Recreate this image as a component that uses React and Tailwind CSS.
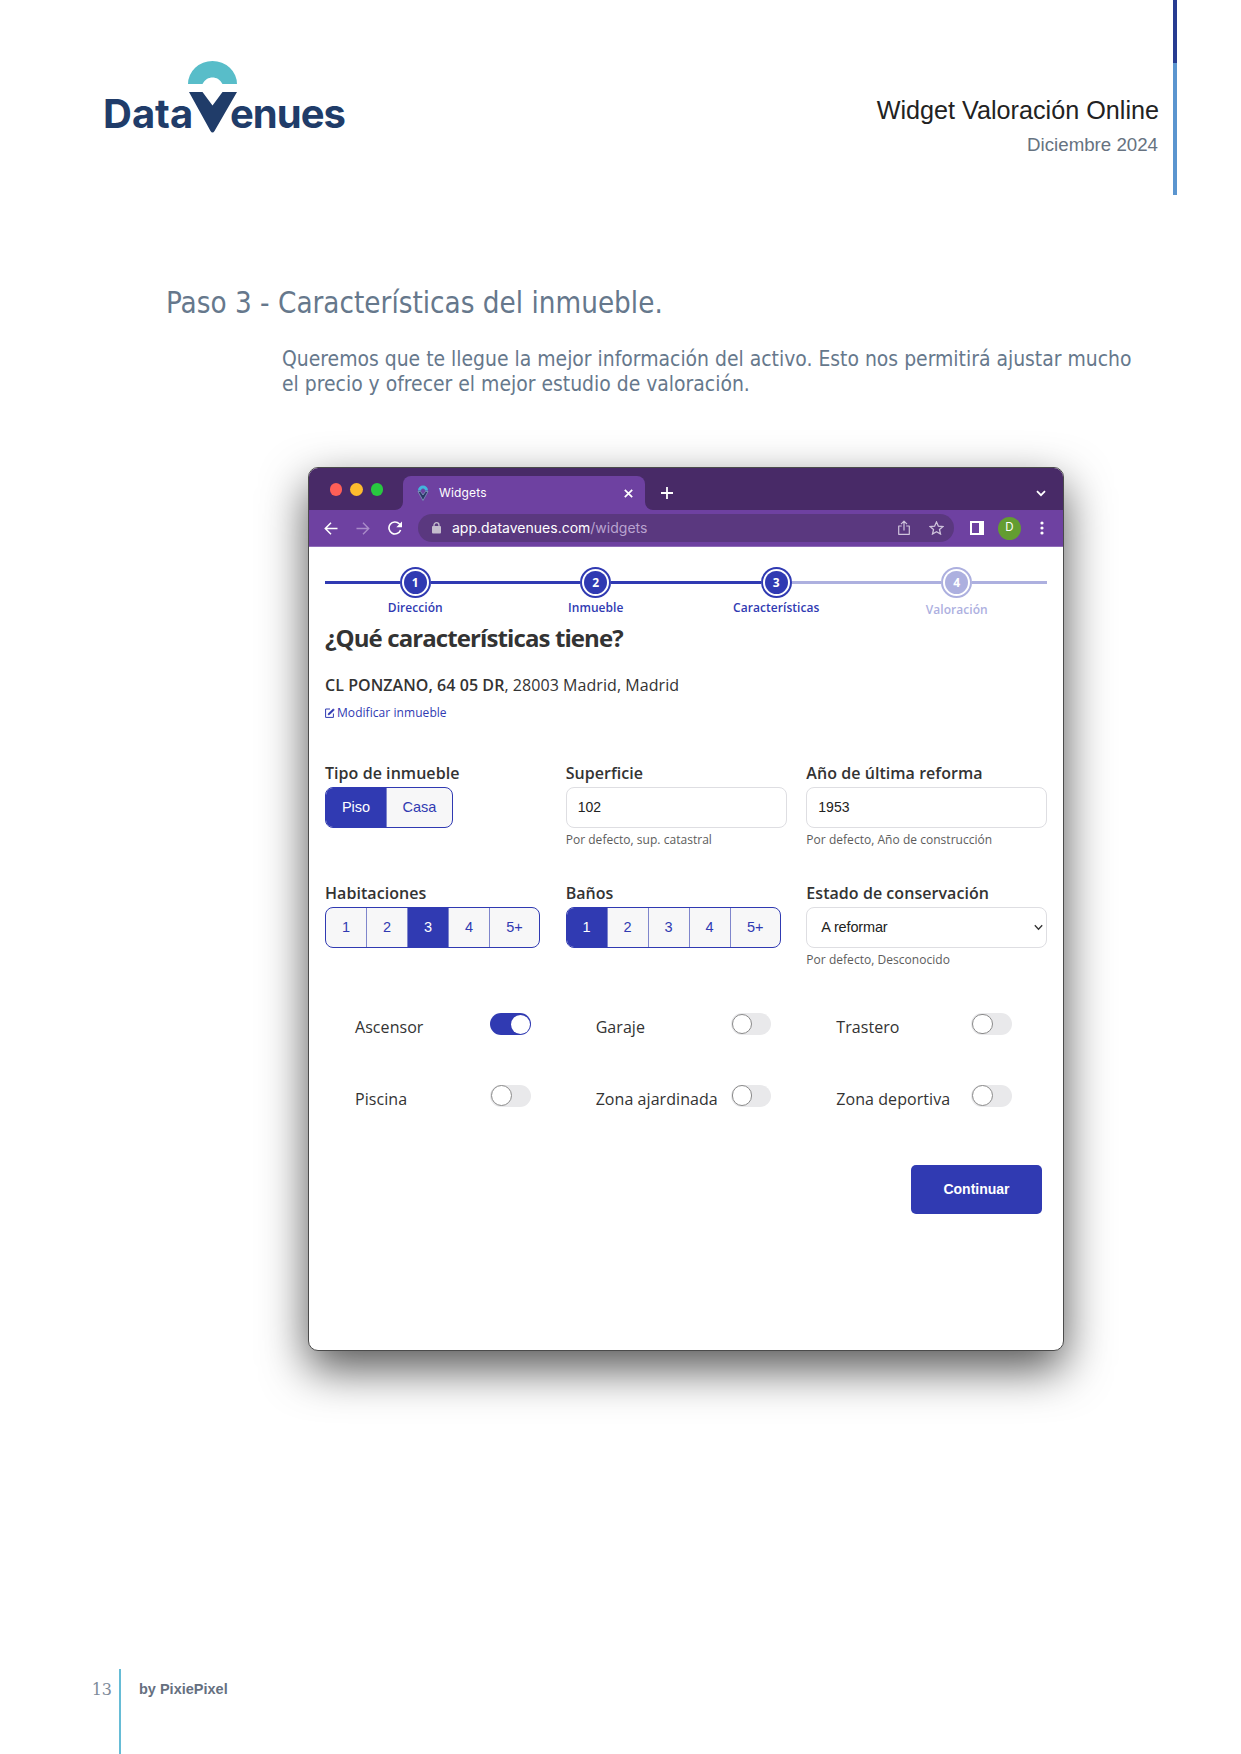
const OPEN = "font-['Open_Sans','Noto_Sans',sans-serif]";
const ARIAL = "font-['Liberation_Sans',Arial,sans-serif]";
const INTER = "font-['Inter',sans-serif]";
const DEJA = "font-['DejaVu_Sans_Condensed','DejaVu_Sans',sans-serif] [font-stretch:condensed]";

function Logo() {
  return (
    <div className={`relative mt-[60px] ml-[106px] h-[74px] w-[242px] text-[40px] leading-[50px] font-bold text-[#203c69] ${INTER}`}>
      <span className="absolute top-[29px] left-[-3px] tracking-[0px]">Data</span>
      <svg className="absolute top-0 left-[81px]" width="52" height="74" viewBox="0 0 52 74">
        <path d="M1 24A24.5 23 0 0 1 50 24H35.5C33 19.5 29.500 17.500 25.500 17.500S18 19.500 15.500 24Z" fill="#58bdc9" />
        <path d="M2 32H15.500L25.500 45.500L35.500 32H50L27.500 71Q25.500 74 23.500 71Z" fill="#203c69" />
      </svg>
      <span className="absolute top-[29px] left-[124px] tracking-[-1px]">enues</span>
    </div>
  );
}

function Favicon() {
  return (
    <svg width="12" height="16" viewBox="0 0 12 16">
      <path d="M1 5.500A5 5 0 0 1 11 5.500H8A2 2 0 0 0 4 5.500Z" fill="#43b4dc" />
      <path d="M1 6.500L6 15.500L11 6.500H8.500L6 10L3.500 6.500Z" fill="#2b3767" stroke="#7d9dbd" strokeWidth="0.8" />
    </svg>
  );
}

function TitleBar() {
  return (
    <div className="flex h-[42px] items-end bg-[#482a67]">
      <div className="ml-[20.500px] flex gap-[8px] self-start pt-[15px]">
        <div className="size-[12.500px] rounded-full bg-[#fe5f57]" />
        <div className="size-[12.500px] rounded-full bg-[#febc2e]" />
        <div className="size-[12.500px] rounded-full bg-[#28c840]" />
      </div>
      <svg className="ml-[11.500px]" width="8" height="8" viewBox="0 0 8 8"><path d="M8 0V8H0A8 8 0 0 0 8 0Z" fill="#6e41a1" /></svg>
      <div className={`flex h-[34px] w-[242px] items-center rounded-t-[8px] bg-[#6e41a1] pl-[14px] text-[12px] text-white ${INTER}`}>
        <Favicon />
        <span className="ml-[10.500px] flex-1 tracking-[0.15px]">Widgets</span>
        <svg className="mr-[12px]" width="9" height="9" viewBox="0 0 9 9"><path d="M.8.8L8.200 8.200M8.200.8L.8 8.200" stroke="#fff" strokeWidth="1.700" /></svg>
      </div>
      <svg width="8" height="8" viewBox="0 0 8 8"><path d="M0 0V8H8A8 8 0 0 1 0 0Z" fill="#6e41a1" /></svg>
      <svg className="mb-[11px] ml-[8px]" width="12" height="12" viewBox="0 0 12 12"><path d="M6 0V12M0 6H12" stroke="#fff" strokeWidth="1.800" /></svg>
      <svg className="mr-[17px] mb-[13px] ml-auto" width="10" height="7" viewBox="0 0 10 7"><path d="M1 1.200L5 5.200L9 1.200" fill="none" stroke="#fff" strokeWidth="1.800" /></svg>
    </div>
  );
}

function ToolBar() {
  return (
    <div className={`flex h-[37px] items-center border-b border-[#8f6db8] bg-[#6e41a1] ${INTER}`}>
      <svg className="ml-[15px]" width="14" height="13" viewBox="0 0 14 13"><path d="M13.500 6.500H1.500M7 .8L1.300 6.500L7 12.200" fill="none" stroke="#fff" strokeWidth="1.500" /></svg>
      <svg className="ml-[18px]" width="14" height="13" viewBox="0 0 14 13"><path d="M.5 6.500H12.500M7 .8L12.700 6.500L7 12.200" fill="none" stroke="#a98cc9" strokeWidth="1.400" /></svg>
      <svg className="ml-[18px]" width="15" height="14" viewBox="0 0 15 14"><path d="M12.600 9A6 6 0 1 1 11.300 2.800L13 4.500" fill="none" stroke="#fff" strokeWidth="1.600" /><path d="M14 .5V6.200H8.300Z" fill="#fff" /></svg>
      <div className="ml-[15px] flex h-[28px] w-[536px] items-center rounded-full bg-[#5a387f]">
        <svg className="ml-[14px]" width="9" height="12" viewBox="0 0 9 12"><rect x="0" y="4" width="9" height="7.500" rx="1" fill="#c4bccd" /><path d="M2 5V3.200A2.500 2.500 0 0 1 7 3.200V5" fill="none" stroke="#c4bccd" strokeWidth="1.300" /></svg>
        <span className="ml-[11px] -mt-px text-[14px] text-white">app.datavenues.com<span className="text-[#b9a3cf]">/widgets</span></span>
        <svg className="ml-auto" width="12" height="16" viewBox="0 0 12 16"><path d="M3.800 6H.7V14.300H11.300V6H8.200M6 10.500V1.300M3 4.200L6 1.200L9 4.200" fill="none" stroke="#cfc4dc" strokeWidth="1.200" strokeLinejoin="round" /></svg>
        <svg className="mr-[10px] ml-[19px]" width="15" height="14" viewBox="0 0 15 14"><path d="M7.500 1L9.400 5.200L13.900 5.600L10.500 8.600L11.500 13L7.500 10.700L3.500 13L4.500 8.600L1.100 5.600L5.600 5.200Z" fill="none" stroke="#cfc4dc" strokeWidth="1.300" /></svg>
      </div>
      <svg className="ml-[16px]" width="14" height="14" viewBox="0 0 14 14"><path d="M0 0H14V14H0ZM2 2V12H9V2Z" fill="#fff" fillRule="evenodd" /></svg>
      <div className="ml-[14px] flex size-[23px] items-center justify-center rounded-full bg-[#639d31] text-[11.500px] text-white">D</div>
      <svg className="ml-[18.500px]" width="4" height="14" viewBox="0 0 4 14" fill="#fff"><circle cx="2" cy="2" r="1.600" /><circle cx="2" cy="7" r="1.600" /><circle cx="2" cy="12" r="1.600" /></svg>
    </div>
  );
}

const steps = [
  { n: 1, label: 'Dirección', left: true, done: true, right: true },
  { n: 2, label: 'Inmueble', left: true, done: true, right: true },
  { n: 3, label: 'Características', left: true, done: true, right: false },
  { n: 4, label: 'Valoración', left: false, done: false, right: false },
];

function Stepper() {
  return (
    <div className="grid h-[75px] w-[722px] grid-cols-4 pt-[20px]">
      {steps.map((s) => (
        <div key={s.n}>
          <div className="flex items-center">
            <div className={`h-[3px] flex-1 ${s.left ? 'bg-[#303ab2]' : 'bg-[#adb0df]'}`} />
            <div className={`flex size-[31px] items-center justify-center rounded-full border-2 ${s.done ? 'border-[#303ab2]' : 'border-[#adb0df]'}`}>
              <div className={`flex size-[23px] items-center justify-center rounded-full text-[12px] font-bold text-white ${s.done ? 'bg-[#303ab2]' : 'bg-[#adb0df]'}`}>{s.n}</div>
            </div>
            <div className={`h-[3px] flex-1 ${s.right ? 'bg-[#303ab2]' : 'bg-[#adb0df]'}`} />
          </div>
          <div className={`text-center text-[12px] leading-[16px] font-semibold tracking-[0.05px] ${s.done ? 'mt-[2px] text-[#303ab2]' : 'mt-[4px] text-[#adb0df]'}`}>{s.label}</div>
        </div>
      ))}
    </div>
  );
}

function Field({ label, hint, children }) {
  return (
    <div className="h-[120px]">
      <div className="mb-[2px] h-[24px] text-[16px] leading-[24px] font-semibold tracking-[0.05px] text-[#333]">{label}</div>
      {children}
      {hint && <div className="mt-[4px] text-[12px] leading-[16px] tracking-[0.03px] text-[#5c5c5c]">{hint}</div>}
    </div>
  );
}

function Segmented({ options, active, widths }) {
  return (
    <div className={`flex h-[41px] w-fit overflow-hidden rounded-[8px] border border-[#303ab2] bg-[#f7f7f8] text-[14.500px] text-[#303ab2] ${ARIAL}`}>
      {options.map((o, i) => (
        <div key={o} className={`flex items-center justify-center ${widths[i]} ${i ? 'border-l border-[#7f86cc]' : ''} ${o === active ? 'bg-[#303ab2] text-white' : ''}`}>{o}</div>
      ))}
    </div>
  );
}

const numW = ['w-[40px]', 'w-[41px]', 'w-[41px]', 'w-[41px]', 'w-[50px]'];
const nums = ['1', '2', '3', '4', '5+'];

function Toggle({ label, on }) {
  return (
    <div className="flex h-[71.500px] w-[205.500px] items-start pl-[30px]">
      <span className="mt-[2px] flex-1 text-[16px] leading-[24px] tracking-[0.06px] whitespace-nowrap text-[#333]">{label}</span>
      <span className={`flex h-[22px] w-[40.500px] items-center rounded-full px-px ${on ? 'justify-end bg-[#303ab2]' : 'bg-[#e9e9eb]'}`}>
        <span className={`rounded-full bg-white ${on ? 'size-[19px]' : 'size-[20.500px] border border-[#8a8a8a]'}`} />
      </span>
    </div>
  );
}

function Browser() {
  return (
    <div className={`mt-[70px] ml-[308px] h-[884px] w-[756px] overflow-hidden rounded-[10px] border border-[#4b4b4b] bg-white shadow-[0_18px_46px_rgba(0,0,0,0.67)] ${OPEN}`}>
      <TitleBar />
      <ToolBar />
      <div className="w-[738px] pl-[16px]">
        <Stepper />
        <h2 className="text-[24px] leading-[32px] font-bold tracking-[-0.9px] text-[#333]">¿Qué características tiene?</h2>
        <div className="mt-[19px] text-[16px] leading-[24px] tracking-[0.06px] text-[#333]"><b className="font-semibold">CL PONZANO, 64 05 DR</b>, 28003 Madrid, Madrid</div>
        <div className="mt-[8px] flex items-center gap-[2px] text-[12px] leading-[16px] text-[#303ab2]">
          <svg width="10" height="10" viewBox="0 0 10 10" fill="none" stroke="#303ab2"><path d="M5 1H.6V9.400H8.400V5.500" strokeWidth="1" /><path d="M3 7L3.500 5.200L8.300.8L9.400 1.900L4.800 6.500Z" fill="#303ab2" strokeWidth="0.500" /></svg>
          <span className="tracking-[0.06px]">Modificar inmueble</span>
        </div>
        <div className="mt-[40px] grid grid-cols-3">
          <Field label="Tipo de inmueble">
            <Segmented options={['Piso', 'Casa']} active="Piso" widths={['w-[60px]', 'w-[66px]']} />
          </Field>
          <Field label="Superficie" hint="Por defecto, sup. catastral">
            <div className={`flex h-[41px] w-[221px] items-center rounded-[8px] border border-[#dedee2] pb-px pl-[11px] text-[14px] text-[#222] ${ARIAL}`}>102</div>
          </Field>
          <Field label="Año de última reforma" hint="Por defecto, Año de construcción">
            <div className={`flex h-[41px] w-[241px] items-center rounded-[8px] border border-[#dedee2] pb-px pl-[11px] text-[14px] text-[#222] ${ARIAL}`}>1953</div>
          </Field>
          <Field label="Habitaciones">
            <Segmented options={nums} active="3" widths={numW} />
          </Field>
          <Field label="Baños">
            <Segmented options={nums} active="1" widths={numW} />
          </Field>
          <Field label="Estado de conservación" hint="Por defecto, Desconocido">
            <div className={`flex h-[41px] w-[241px] items-center justify-between rounded-[8px] border border-[#dedee2] pr-[3px] pl-[14px] text-[14.500px] tracking-[-0.15px] text-[#222] ${ARIAL}`}>
              A reformar
              <svg width="9" height="7" viewBox="0 0 9 7"><path d="M.8 1.200L4.500 5.200L8.200 1.200" fill="none" stroke="#333" strokeWidth="1.300" /></svg>
            </div>
          </Field>
        </div>
        <div className="mt-[12px] grid grid-cols-3">
          <Toggle label="Ascensor" on />
          <Toggle label="Garaje" />
          <Toggle label="Trastero" />
          <Toggle label="Piscina" />
          <Toggle label="Zona ajardinada" />
          <Toggle label="Zona deportiva" />
        </div>
        <div className={`mt-[9px] mr-[5px] ml-auto flex h-[49px] w-[131px] items-center justify-center rounded-[5px] bg-[#303ab2] pb-px text-[14px] font-bold text-white ${ARIAL}`}>Continuar</div>
      </div>
    </div>
  );
}

export default function App() {
  return (
    <div className="flex h-[1754px] w-[1241px] flex-col overflow-hidden bg-white">
      <header className={`flex h-[195px] ${ARIAL}`}>
        <Logo />
        <div className="ml-auto pt-[94px] pr-[14px] text-right">
          <div className="text-[25.200px] leading-[32px] text-[#222]">Widget Valoración Online</div>
          <div className="mt-[9px] pr-px text-[18.700px] leading-[20px] text-[#667280]">Diciembre 2024</div>
        </div>
        <div className="mr-[64px] flex w-[4px] flex-col">
          <div className="h-[63px] bg-[#273c91]" />
          <div className="flex-1 bg-[#5b95cf]" />
        </div>
      </header>
      <h1 className={`mt-[88px] ml-[166px] text-[29.300px] leading-[40px] text-[#66788c] ${DEJA}`}>Paso 3 - Características del inmueble.</h1>
      <p className={`mt-[24px] ml-[282px] text-[20.920px] leading-[25px] whitespace-nowrap text-[#66788c] ${DEJA}`}>
        Queremos que te llegue la mejor información del activo. Esto nos permitirá ajustar mucho<br />el precio y ofrecer el mejor estudio de valoración.
      </p>
      <Browser />
      <footer className="mt-auto flex h-[85px]">
        <div className="w-[112px] pt-[9px] text-right font-['DejaVu_Serif',serif] text-[16px] leading-[24px] text-[#7d8a99]">13</div>
        <div className="ml-[7px] w-[2px] bg-[#66bcd6]" />
        <div className={`ml-[18px] pt-[8px] text-[14.500px] leading-[24px] font-bold text-[#66707f] ${ARIAL}`}>by PixiePixel</div>
      </footer>
    </div>
  );
}
